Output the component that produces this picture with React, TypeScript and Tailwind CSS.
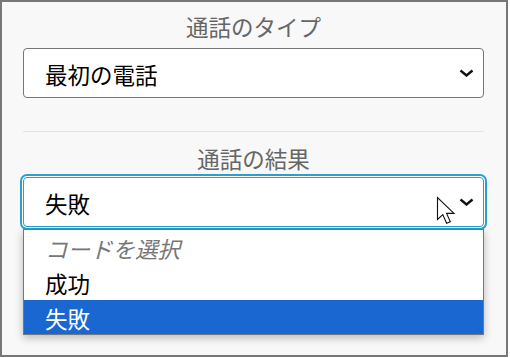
import React from 'react';

/* ------------------------------------------------------------------ */
/*  Small drawings                                                     */
/* ------------------------------------------------------------------ */

function Chevron() {
    return (
        <svg width="15" height="8" viewBox="0 0 15 8" className="shrink-0">
            <path d="M1.5 1.5 L7.5 6.5 L13.5 1.5" fill="none" stroke="#111" strokeWidth="2.4" />
        </svg>
    );
}

function Cursor() {
    return (
        <svg width="21" height="29" viewBox="0 0 21 29" className="absolute left-[413px] top-[19px]">
            <path
                d="M1.5 1.5 L1.5 23.5 L6.8 18.6 L10.6 27.3 L14.3 25.8 L10.6 17.4 L18 17.4 Z"
                fill="#fff"
                stroke="#111"
                strokeWidth="1.1"
                strokeLinejoin="miter"
            />
        </svg>
    );
}

/* ------------------------------------------------------------------ */
/*  Component                                                          */
/* ------------------------------------------------------------------ */

export default function App() {
    const font = { fontFamily: '"Noto Sans CJK JP", "Noto Sans", sans-serif' };

    return (
        <div className="w-[510px] h-[358px] bg-white" style={font}>
            <div className="w-[508px] h-[357px] border-2 border-[#777] bg-[#f8f8f8] pl-[21px] pr-[22px] pt-[8px]">
                {/* Call type */}
                <div className="text-center text-[22.5px] leading-[32px] text-[#666]">通話のタイプ</div>
                <div className="mt-[6px] h-[50px] flex items-center justify-between rounded-[4px] border border-[#767676] bg-white pl-[21px] pr-[9px]">
                    <span className="pt-[3px] text-[22.5px] text-black">最初の電話</span>
                    <Chevron />
                </div>

                <div className="mt-[33px] h-px bg-[#e3e3e3]" />

                {/* Call result */}
                <div className="mt-[10px] text-center text-[22.5px] leading-[32px] text-[#666]">通話の結果</div>
                <div className="relative mt-[3px]">
                    <div className="h-[50px] flex items-center justify-between rounded-[4px] border border-[#2a9fcc] bg-white pl-[21px] pr-[9px] shadow-[0_0_0_1px_#fff,0_0_0_3px_#2aa0cf]">
                        <span className="pt-[3px] text-[22.5px] text-black">失敗</span>
                        <Chevron />
                    </div>
                    <Cursor />

                    {/* Open list */}
                    <ul className="absolute left-0 right-0 top-[52px] border border-[#777] bg-white shadow-[0_3px_8px_rgba(0,0,0,0.25)] text-[22.5px]">
                        <li className="h-[35px] flex items-center pl-[21px] pt-[3px] italic text-[#777]">コードを選択</li>
                        <li className="h-[35px] flex items-center pl-[21px] pt-[3px] text-black">成功</li>
                        <li className="h-[34px] flex items-center pl-[21px] pt-[3px] bg-[#1a67d2] text-white">失敗</li>
                    </ul>
                </div>
            </div>
        </div>
    );
}
